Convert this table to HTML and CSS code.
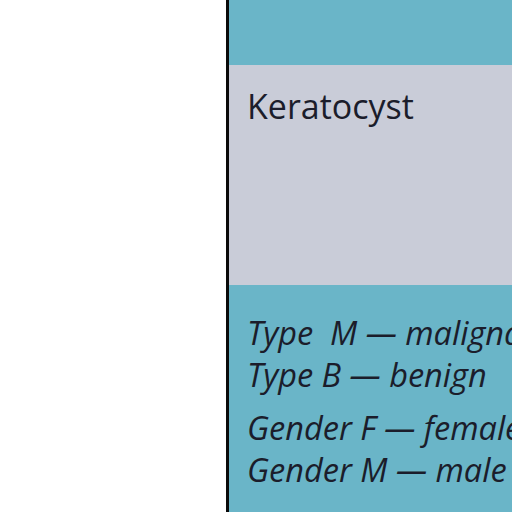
FILE: index.html
```html
<!DOCTYPE html>
<html>
<head>
<meta charset="utf-8">
<link rel="stylesheet" href="styles.css">
</head>
<body>
<div class="page">
  <div class="blank"></div>
  <div class="table">
    <div class="row head"></div>
    <div class="row name">Keratocyst</div>
    <div class="row legend">
      <p class="group">Type&nbsp; M — malignant<br>Type B — benign</p>
      <p class="group">Gender F — female<br>Gender M — male</p>
    </div>
  </div>
</div>
</body>
</html>
```
FILE: styles.css
```css
html, body {
  margin: 0;
  padding: 0;
  background: #ffffff;
  overflow: hidden;
}
.page {
  display: flex;
  width: 512px;
  height: 512px;
  overflow: hidden;
  font-family: "Open Sans", sans-serif;
  color: #1b1d2b;
}
.blank {
  width: 226px;
  flex: none;
  background: #ffffff;
}
.table {
  flex: 1;
  border-left: 3px solid #0a0a0a;
  display: flex;
  flex-direction: column;
  white-space: nowrap;
  min-width: 0;
}
.row {
  padding-left: 18px;
}
.head {
  height: 65px;
  background: #6ab5c8;
}
.name {
  height: 220px;
  box-sizing: border-box;
  padding-top: 18px;
  background: #c9ccd8;
  font-size: 34px;
  line-height: 46px;
}
.legend {
  flex: 1;
  background: #6ab5c8;
  padding-top: 27px;
  font-size: 32.5px;
  font-style: italic;
}
.group {
  margin: 0 0 11px 0;
  line-height: 42px;
}
```
